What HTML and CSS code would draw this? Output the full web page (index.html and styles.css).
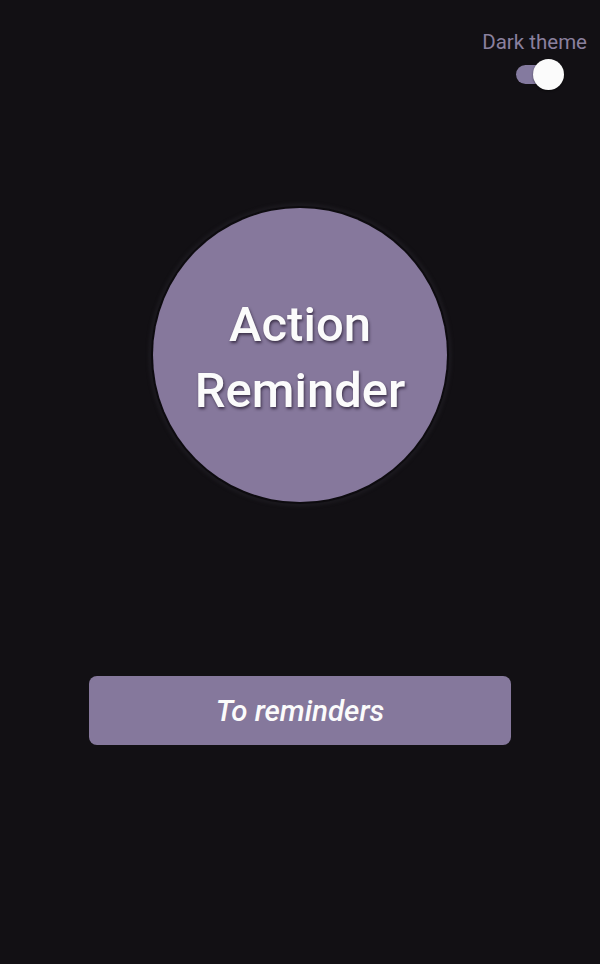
FILE: index.html
```html
<!DOCTYPE html>
<html>
<head>
<meta charset="utf-8">
<link rel="stylesheet" href="styles.css">
</head>
<body>
<div class="screen">
  <div class="theme">
    <span class="theme-label">Dark theme</span>
    <div class="switch"><div class="track"></div><div class="thumb"></div></div>
  </div>
  <div class="logo-wrap">
    <div class="logo"><span>Action<br>Reminder</span></div>
  </div>
  <button class="cta">To reminders</button>
</div>
</body>
</html>
```
FILE: styles.css
```css
html, body { margin: 0; padding: 0; background: #121014; }
.screen {
  width: 600px; height: 964px; background: #121014;
  font-family: Roboto, "Liberation Sans", sans-serif;
  display: flex; flex-direction: column; align-items: center;
}
.theme {
  align-self: flex-end;
  margin: 30px 13px 0 0;
  display: flex; flex-direction: column; align-items: flex-end;
}
.theme-label { color: #8a809e; font-size: 20.5px; line-height: 24px; }
.switch { position: relative; width: 48px; height: 31px; margin-top: 5px; margin-right: 23px; }
.track {
  position: absolute; left: 0; top: 6px; width: 36px; height: 19px;
  border-radius: 10px; background: #847a9f;
}
.thumb {
  position: absolute; right: 0; top: 0; width: 31px; height: 31px;
  border-radius: 50%; background: #fbfbfb;
  box-shadow: 0 1px 2px rgba(0,0,0,0.5);
}
.logo-wrap { margin-top: 118px; }
.logo {
  width: 294px; height: 294px; border-radius: 50%;
  background: #86789c;
  box-shadow: 0 0 0 2px #0d0b0f, 0 0 3px 5px #1a181d;
  display: flex; align-items: center; justify-content: center;
  text-align: center;
}
.logo span {
  color: #fbfbfb; font-size: 49px; line-height: 66px; font-weight: 500;
  text-shadow: 1px 2px 3px rgba(30,20,40,0.7);
  margin-top: 6px;
}
.cta {
  margin-top: 174px;
  width: 422px; height: 69px; border: none; border-radius: 8px;
  background: #85789c; color: #fbfbfb;
  font-family: Roboto, "Liberation Sans", sans-serif;
  font-size: 29.5px; font-style: italic; font-weight: 500;
  padding: 0;
}
```
